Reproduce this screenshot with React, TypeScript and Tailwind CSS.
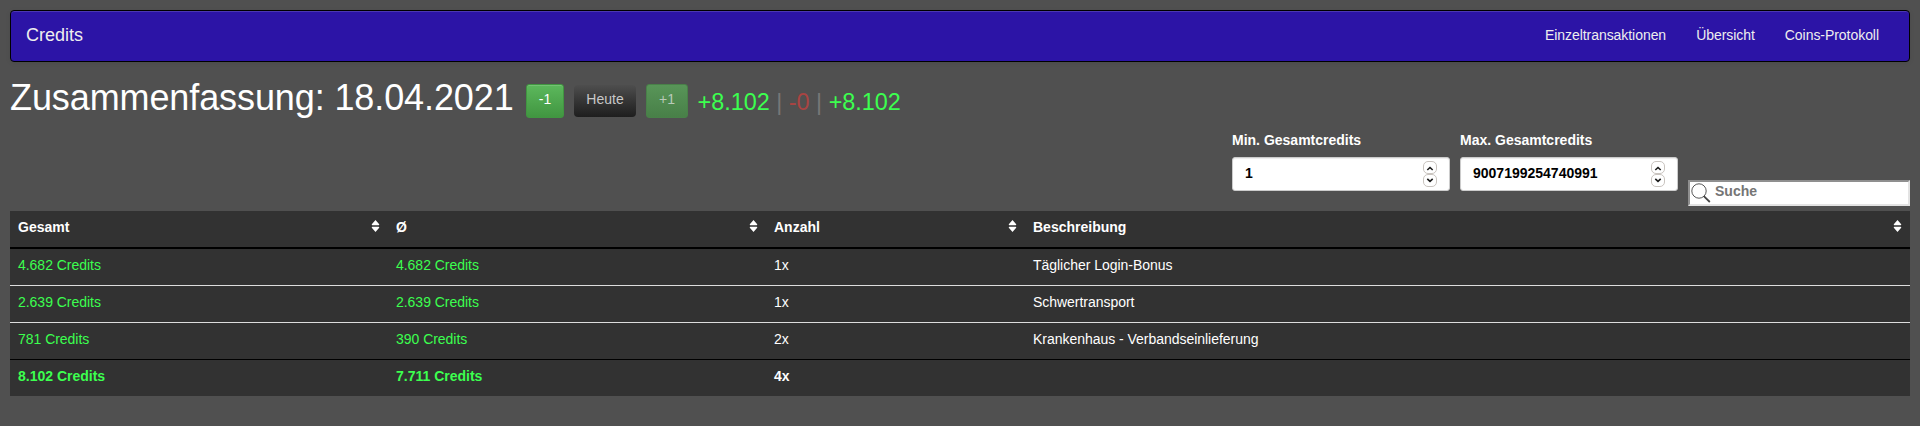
const columns = ["Gesamt", "Ø", "Anzahl", "Beschreibung"];

const rows = [
  ["4.682 Credits", "4.682 Credits", "1x", "Täglicher Login-Bonus"],
  ["2.639 Credits", "2.639 Credits", "1x", "Schwertransport"],
  ["781 Credits", "390 Credits", "2x", "Krankenhaus - Verbandseinlieferung"],
];

const rowBorders = ["", "border-t border-[#dddddd]", "border-t border-[#dddddd]"];

function SortIcon() {
  return (
    <svg width="9" height="12" viewBox="0 0 9 12" className="mt-px mr-px" fill="#fff">
      <path d="M4.5 0 8.2 4.2q.3 1-.7 1h-6q-1 0-.7-1zM4.5 12 8.2 7.8q.3-1-.7-1h-6q-1 0-.7 1z" />
    </svg>
  );
}

function SpinButton({ down = false }: { down?: boolean }) {
  return (
    <span className="flex h-[13px] w-[14px] items-center justify-center rounded-[5px] border border-[#c9c4bf] bg-white">
      <svg width="8" height="6" viewBox="0 0 8 6" fill="none" stroke="#1c1c1c" strokeWidth="1.6">
        <path d={down ? "M1.3 .8 4 3.3 6.7 .8" : "M1.3 5 4 2.5 6.7 5"} />
      </svg>
    </span>
  );
}

function NumberField({ label, value }: { label: string; value: string }) {
  return (
    <label className="block w-[218px]">
      <span className="mb-[7px] block h-5">{label}</span>
      <span className="flex h-[34px] items-center justify-between rounded-[3px] border border-[#cccccc] bg-white pr-3 pl-3 text-black shadow-[inset_0_1px_1px_rgba(0,0,0,0.075)]">
        <span className="pb-[3px]">{value}</span>
        <span className="flex flex-col">
          <SpinButton />
          <SpinButton down />
        </span>
      </span>
    </label>
  );
}

export default function App() {
  return (
    <div className="h-[426px] w-full overflow-hidden bg-[#505050] p-[10px] font-['Liberation_Sans',Arial,sans-serif] text-sm leading-5 text-white">
      <nav className="flex h-[52px] items-start justify-between rounded-[4px] border border-black bg-[#2c14a6] pt-[14px] pr-[30px] pl-[15px] shadow-[inset_0_1px_0_rgba(255,255,255,0.15),0_1px_5px_rgba(0,0,0,0.075)]">
        <a className="text-lg leading-5 text-[#eeeeee]">Credits</a>
        <div className="flex gap-[30px] tracking-[-0.05px] text-[#eeeeee]">
          <a>Einzeltransaktionen</a>
          <a>Übersicht</a>
          <a>Coins-Protokoll</a>
        </div>
      </nav>

      <div className="flex h-[66px] items-start pt-[22px]">
        <h1 className="w-[516px] text-[36px] leading-[28px] tracking-[-0.1px] whitespace-nowrap">Zusammenfassung: 18.04.2021</h1>
        <button className="h-[34px] w-[38px] rounded-[3px] border border-[#419641] bg-linear-to-b from-[#5cb85c] to-[#419641] pb-1 leading-5 shadow-[inset_0_1px_0_rgba(255,255,255,0.15)]">-1</button>
        <button className="mt-px ml-[10px] h-8 w-[62px] rounded-[4px] bg-linear-to-b from-[#4e4e4e] to-[#1e1e1e] pb-1 leading-5 text-[#c8c8c8]">Heute</button>
        <button className="ml-[10px] h-[34px] w-[42px] rounded-[3px] border border-[#498149] bg-linear-to-b from-[#589558] to-[#488048] pb-1 leading-5 text-[#b9cab9]">+1</button>
        <div className="ml-[9.5px] pt-[5px] text-[23.4px] leading-[26px] whitespace-nowrap text-[#777777]">
          <span className="text-[#3cff4f]">+8.102</span> | <span className="text-[#a94442]">-0</span> |{" "}
          <span className="text-[#3cff4f]">+8.102</span>
        </div>
      </div>

      <div className="flex h-[83px] items-start justify-end gap-[10px] pt-[2px] font-bold">
        <NumberField label="Min. Gesamtcredits" value="1" />
        <NumberField label="Max. Gesamtcredits" value="9007199254740991" />
        <div className="mt-[50px] flex h-[26px] w-[222px] items-start border-2 border-t-[#8f8f8f] border-r-[#e3e3e3] border-b-[#e3e3e3] border-l-[#8f8f8f] bg-white text-[#757575]">
          <svg width="20" height="20" viewBox="0 0 20 20" className="mt-px ml-px" fill="none" stroke="#444">
            <circle cx="8" cy="8" r="7.2" strokeWidth="0.9" />
            <path d="m12.8 13.2 6 5.8" strokeWidth="1.8" />
          </svg>
          <span className="-mt-px ml-[4px]">Suche</span>
        </div>
      </div>

      <table className="w-full table-fixed border-separate border-spacing-0 bg-[#323232] text-left">
        <colgroup>
          <col className="w-[378px]" />
          <col className="w-[378px]" />
          <col className="w-[259px]" />
          <col />
        </colgroup>
        <thead>
          <tr>
            {columns.map((name) => (
              <th key={name} className="h-[38px] border-b-2 border-black p-0 align-top font-bold">
                <div className="flex items-start justify-between pt-[6px] pr-[7px] pl-2">
                  <span>{name}</span>
                  <span className="pt-[2px]"><SortIcon /></span>
                </div>
              </th>
            ))}
          </tr>
        </thead>
        <tbody>
          {rows.map((row, i) => (
            <tr key={i}>
              {row.map((cell, j) => (
                <td key={j} className={`px-2 pt-[6px] pb-[10px] tracking-[-0.03px] ${rowBorders[i]} ${j < 2 ? "text-[#3cff4f]" : ""}`}>{cell}</td>
              ))}
            </tr>
          ))}
        </tbody>
        <tfoot>
          <tr className="font-bold">
            <td className="border-t border-black px-2 pt-[6px] pb-[10px] text-[#3cff4f]">8.102 Credits</td>
            <td className="border-t border-black px-2 pt-[6px] pb-[10px] text-[#3cff4f]">7.711 Credits</td>
            <td className="border-t border-black px-2 pt-[6px] pb-[10px]">4x</td>
            <td className="border-t border-black" />
          </tr>
        </tfoot>
      </table>
    </div>
  );
}
